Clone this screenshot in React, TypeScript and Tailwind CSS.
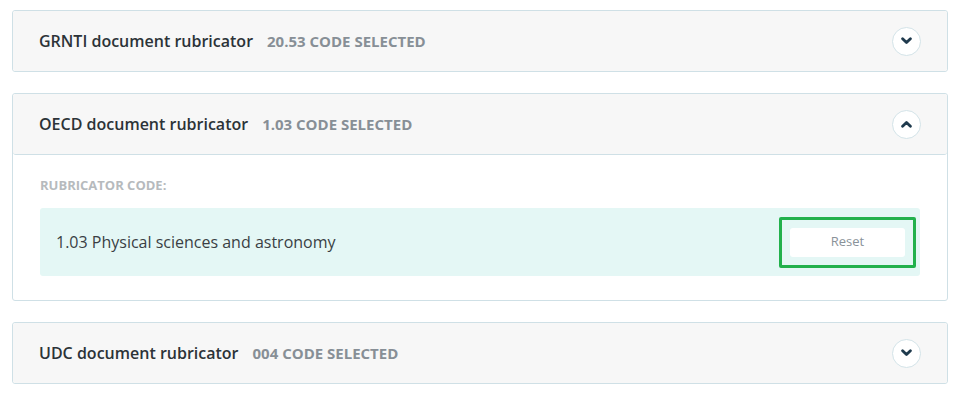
import React, { useState } from 'react';

type Rubricator = {
  id: string;
  title: string;
  code: string;
  description: string;
};

const rubricators: Rubricator[] = [
  { id: 'grnti', title: 'GRNTI document rubricator', code: '20.53', description: '20.53 Technical means of informatics' },
  { id: 'oecd', title: 'OECD document rubricator', code: '1.03', description: '1.03 Physical sciences and astronomy' },
  { id: 'udc', title: 'UDC document rubricator', code: '004', description: '004 Computer science' },
];

function Chevron({ open }: { open: boolean }) {
  return (
    <span className="flex h-[29px] w-[29px] items-center justify-center rounded-full border-[1.5px] border-[#d3e3e8] bg-white">
      <svg width="11" height="8" viewBox="0 0 11 8" fill="none" className={open ? 'rotate-180' : ''}>
        <path d="M1.6 1.8 L5.5 5.6 L9.4 1.8" stroke="#1f3a4d" strokeWidth="2.8" strokeLinecap="round" strokeLinejoin="round" />
      </svg>
    </span>
  );
}

export default function App() {
  const [openId, setOpenId] = useState<string>('oecd');

  return (
    <div className="min-h-screen bg-white pt-[10px] pl-[12px] pr-[10px]" style={{ fontFamily: '"Open Sans", "Liberation Sans", sans-serif' }}>
      {rubricators.map((r) => {
        const open = openId === r.id;
        return (
          <div key={r.id} className="mb-[21px] rounded-[3px] border border-[#cfe0e6] bg-white">
            <button
              type="button"
              onClick={() => setOpenId(open ? '' : r.id)}
              className={`flex w-full items-center justify-between rounded-[3px] bg-[#f7f7f7] pl-[26px] pr-[26px] text-left ${open ? 'h-[61px] border-b border-[#cfe0e6]' : 'h-[60px]'}`}
            >
              <span className="flex items-baseline">
                <span className="text-[16px] font-semibold text-[#2c3338]">{r.title}</span>
                <span className="ml-[14px] text-[15px] font-bold uppercase text-[#878f96]">{r.code} code selected</span>
              </span>
              <Chevron open={open} />
            </button>
            {open && (
              <div className="px-[27px] pt-[22px] pb-[24px]">
                <div className="text-[13px] font-bold uppercase leading-4 text-[#b6babd]">Rubricator code:</div>
                <div className="mt-[15px] flex h-[68px] items-center justify-between rounded-[3px] bg-[#e4f7f5] pl-[16px] pr-[4px]">
                  <span className="text-[16px] text-[#3a3f44]">{r.description}</span>
                  <div className="rounded-[2px] border-[3px] border-[#22b14c] p-[8px]">
                    <button type="button" className="h-[29px] w-[115px] rounded-[3px] bg-white text-[13px] text-[#8a9299]">
                      Reset
                    </button>
                  </div>
                </div>
              </div>
            )}
          </div>
        );
      })}
    </div>
  );
}
